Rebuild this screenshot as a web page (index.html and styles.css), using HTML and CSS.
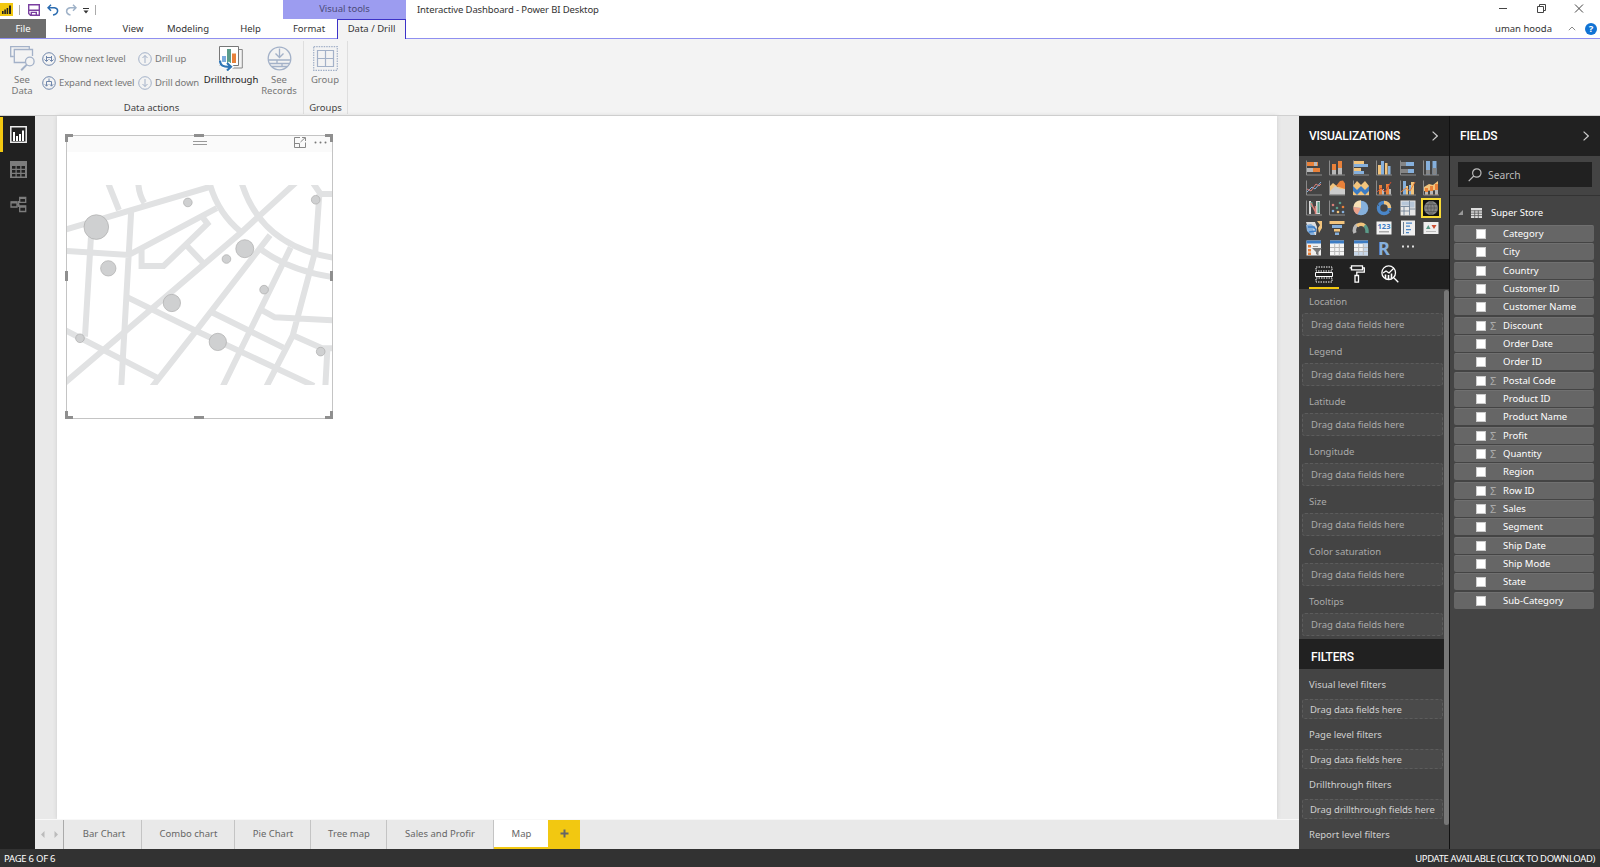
FILE: index.html
```
<!DOCTYPE html>
<html lang="en">

<head>
    <meta charset="UTF-8" />
    <meta name="viewport" content="width=device-width, initial-scale=1.0" />
    <title>Interactive Dashboard - Power BI Desktop</title>
    <link rel="stylesheet" href="styles.css">
</head>

<body>
    <header class="top">
        <div class="top-left">
            <div class="quick-bar">
                <svg class="logo" width="13" height="13" viewBox="0 0 13 13"><path fill="#f2c811" d="M0 0h13v13H0z" /><path d="M2 8h1.6v3H2zM4.3 6.5h1.6V11H4.3zM6.6 5h1.6v6H6.6zM9 2.5h2V11H9z" fill="#222" /></svg>
                <i class="bar"></i>
                <svg class="save" width="12" height="12" viewBox="0 0 12 12" fill="none" stroke="#7a3fa0" stroke-width="1.4"><path d="M.7.7h10.6v10.6H2.5L.7 9.5zM.7 6.2h10.6M3.3 11V8.4h5V11" /></svg>
                <svg class="undo" width="12" height="12" viewBox="0 0 12 12" fill="none" stroke="#2b6cb0" stroke-width="1.5"><path d="M4 .8L1 3.8l3 3M1 3.8h6.5c4.6 1 4 6.4-1.5 7.2" /></svg>
                <svg class="redo" width="12" height="12" viewBox="0 0 12 12" fill="none" stroke="#9fb2c8" stroke-width="1.5"><path d="M8 .8l3 3-3 3M11 3.8H5C.3 4.8.5 10 5.5 11" /></svg>
                <svg class="more" width="6" height="6" viewBox="0 0 6 6"><path d="M0 0h6v1H0zM.5 2.5h5L3 5.5z" fill="#333" /></svg>
                <i class="bar"></i>
            </div>
            <nav class="tabs">
                <a class="tab file">File</a>
                <a class="tab home">Home</a>
                <a class="tab view">View</a>
                <a class="tab modeling">Modeling</a>
                <a class="tab help">Help</a>
            </nav>
        </div>
        <div class="tools">
            <div class="tools-title">Visual tools</div>
            <nav class="tabs">
                <a class="tab format">Format</a>
                <a class="tab drill active">Data / Drill</a>
            </nav>
        </div>
        <div class="top-right">
            <div class="title-row">
                <span class="title">Interactive Dashboard - Power BI Desktop</span>
                <svg class="win-buttons" width="86" height="10" viewBox="0 0 86 10" fill="none" stroke="#444"><path d="M0 4.5h8M38.5 2.5h6v6h-6zM40.5 2.5v-2h6v6h-2M76 .5l8 8M84 .5l-8 8" /></svg>
            </div>
            <div class="user-row">
                <span class="user">uman hooda</span>
                <svg width="8" height="5" viewBox="0 0 8 5" fill="none" stroke="#888"><path d="M.8 4.2L4 1l3.200 3.200" /></svg>
                <span class="question">?</span>
            </div>
        </div>
    </header>

    <section class="ribbon">
        <div class="group data-actions">
            <div class="commands">
                <div class="command see-data">
                    <svg width="25" height="25" viewBox="0 0 25 25" fill="none" stroke="#a3b1c8" stroke-width="1.3"><path d="M3.5 10.5H.7V.7h18.6v2.800M15 16.500H4.300v-13H22.500v6.500" /><circle cx="19.800" cy="15.500" r="4.300" /><path d="M16.800 18.600l-5.600 5.700" stroke-width="2" /></svg>
                    <span>See<br>Data</span>
                </div>
                <div class="stack levels">
                    <div class="small-command">
                        <svg width="14" height="14" viewBox="0 0 14 14" fill="none" stroke="#6f86ab"><circle cx="7" cy="7" r="6.300" /><path d="M4.500 4v5M9.500 4v5M2.500 7.500l2 2 2-2M7.500 7.500l2 2 2-2M4.500 5.500h5" /></svg>
                        <span>Show next level</span>
                    </div>
                    <div class="small-command">
                        <svg width="14" height="14" viewBox="0 0 14 14" fill="none" stroke="#6f86ab"><circle cx="7" cy="7" r="6.300" /><path d="M7 2.500V5M4.500 10V5.500h5V10M2.800 8.300l1.700 1.900 1.700-1.900M7.800 8.300l1.700 1.900 1.700-1.900" /></svg>
                        <span>Expand next level</span>
                    </div>
                </div>
                <div class="stack drills">
                    <div class="small-command">
                        <svg width="14" height="14" viewBox="0 0 14 14" fill="none" stroke="#a3b1c8"><circle cx="7" cy="7" r="6.300" /><path d="M7 11V3.500M4.500 6L7 3.500 9.500 6" /></svg>
                        <span>Drill up</span>
                    </div>
                    <div class="small-command">
                        <svg width="14" height="14" viewBox="0 0 14 14" fill="none" stroke="#a3b1c8"><circle cx="7" cy="7" r="6.300" /><path d="M7 3v7.500M4.500 8L7 10.500 9.500 8" /></svg>
                        <span>Drill down</span>
                    </div>
                </div>
                <div class="command drillthrough">
                    <svg width="25" height="25" viewBox="0 0 25 25" fill="none"><path d="M20 3.500h3.300v18.500H7" stroke="#888" /><path d="M.5.5h19v19H.5z" fill="#fff" stroke="#777" /><path fill="#7cabdd" d="M3 10h4v6H3z" /><path fill="#5b9c8a" d="M8 3h4v14H8z" /><path fill="#e8813a" d="M13 7.500h4V17h-4z" /><path d="M1 14.500c0 5 3 6.500 10 6.300M8.500 17l4 3.800-4 3.700" stroke="#fff" stroke-width="4" /><path d="M1 14.500c0 5 3 6.500 10 6.300M8 17l4 3.800L8 24.500" stroke="#2e75b6" stroke-width="2.200" /></svg>
                    <span>Drillthrough</span>
                </div>
                <div class="command see-records">
                    <svg width="25" height="25" viewBox="0 0 25 25" fill="none" stroke="#a3b1c8" stroke-width="1.3"><circle cx="12.500" cy="12.500" r="11.300" /><path d="M12.500 2.500V11M8.500 7.500l4 4 4-4M1.500 14h22M2.500 17.500h20M5 20.500h15M10 14v3.500M15 17.500v3" /></svg>
                    <span>See<br>Records</span>
                </div>
            </div>
            <div class="group-label">Data actions</div>
        </div>
        <div class="group groups">
            <div class="commands">
                <div class="command">
                    <svg width="25" height="25" viewBox="0 0 25 25" fill="none" stroke="#a3b1c8" stroke-width="1.2"><path d="M.7.7h23.600v23.600H.7z" stroke-dasharray="1.500 1" /><path d="M4.500 4.500h16v16h-16zM12.500 4.500v16M4.500 12.500h16" /></svg>
                    <span>Group</span>
                </div>
            </div>
            <div class="group-label">Groups</div>
        </div>
    </section>

    <main>
        <nav class="side-nav">
            <a class="side-item active"><svg width="17" height="17" viewBox="0 0 17 17"><path d="M.8.8h15.400v15.400H.8z" fill="none" stroke="#eee" stroke-width="1.500" /><path d="M3 6h2v9H3zM6 10h2v5H6zM9 8h2v7H9zM12 4.500h2V15h-2z" fill="#fff" /></svg></a>
            <a class="side-item"><svg width="17" height="17" viewBox="0 0 17 17"><path d="M0 0h17v17H0z" fill="#7d7d7d" /><path d="M2 5h3.500v2.800H2zM6.700 5h3.500v2.800H6.700zM11.500 5H15v2.800h-3.500zM2 9h3.500v2.800H2zM6.700 9h3.500v2.800H6.700zM11.500 9H15v2.800h-3.500zM2 13h3.500v2.500H2zM6.700 13h3.500v2.500H6.700zM11.500 13H15v2.500h-3.500z" fill="#212121" /></svg></a>
            <a class="side-item"><svg width="17" height="17" viewBox="0 0 17 17" fill="none" stroke="#7d7d7d" stroke-width="1.300"><path d="M1 6h6v5H1zM9.700 1.300h6v5h-6zM9.700 10h6v5.500h-6zM7 8.500h2.500M8.500 5v6" /><path d="M1 6.500h6M9.700 2h6M9.700 10.800h6" stroke-width="2" /></svg></a>
        </nav>

        <section class="report">
            <div class="workspace">
                <div class="page">
                    <div class="visual">
                        <div class="visual-header">
                            <i class="grip"></i>
                            <svg class="focus" width="12" height="11" viewBox="0 0 12 11" fill="none" stroke="#888"><path d="M6 .5H.5v10h11V5.500M.5 6.500h5v4M6.500 5L11 .8M8 .5h3.500V4" /></svg>
                            <svg class="dots" width="13" height="3" viewBox="0 0 13 3" fill="#777"><circle cx="1.500" cy="1.500" r="1" /><circle cx="6.500" cy="1.500" r="1" /><circle cx="11.500" cy="1.500" r="1" /></svg>
                        </div>
                        <svg class="map" viewBox="50 195 796 600">
                            <g class="roads">
                                <path d="M40 330L480 200M174 190l32 80M264 190q3 35 18 58M243 270L213 800M122 350L104 650M40 392l195 13L500 264M274 390v48h66l132-127-15-20M408 375l57 60" />
                                <path d="M480 195q25 85 92 140M575 190q60 190 280 224M740 185L570 340 40 792M660 345L440 630 305 802M232 532l200 98 360 168M40 628l282 146M485 577l215 106" />
                                <path d="M635 390q90 65 220 82M722 382L518 800M790 190l22 32h44M808 222l-12 170-56 210-12 45-80 155M638 572l36 20 180 9M730 647l86 38h40M832 690l-6 110" />
                            </g>
                            <g class="bubbles">
                                <circle cx="138" cy="321" r="37" />
                                <circle cx="174" cy="445" r="23" />
                                <circle cx="413" cy="247" r="13" />
                                <circle cx="797" cy="239" r="13" />
                                <circle cx="584" cy="386" r="27" />
                                <circle cx="529" cy="417" r="13" />
                                <circle cx="642" cy="509" r="13" />
                                <circle cx="365" cy="549" r="26" />
                                <circle cx="503" cy="666" r="26" />
                                <circle cx="89" cy="655" r="13" />
                                <circle cx="812" cy="695" r="13" />
                            </g>
                        </svg>
                        <svg class="handles" width="268" height="285" viewBox="0 0 268 285" fill="none" stroke="#8f8f8f" stroke-width="3"><path d="M1.500 8V1.500H8M260 1.500h6.500V8M1.500 277v6.500H8M260 283.500h6.500V277M129 1.500h10M129 283.500h10M1.500 137v10M266.500 137v10" /></svg>
                    </div>
                </div>
            </div>
            <nav class="page-tabs">
                <div class="arrows">
                    <svg width="17" height="7" viewBox="0 0 17 7" fill="#bbb"><path d="M3.500 0v7L0 3.500zM13.500 0v7L17 3.500z" /></svg>
                </div>
                <a class="page-tab bar-chart">Bar Chart</a>
                <a class="page-tab combo">Combo chart</a>
                <a class="page-tab pie">Pie Chart</a>
                <a class="page-tab tree">Tree map</a>
                <a class="page-tab sales">Sales and Profir</a>
                <a class="page-tab current">Map</a>
                <a class="add-page"><svg width="9" height="9" viewBox="0 0 9 9"><path d="M4.500.5v8M.5 4.500h8" stroke="#666" stroke-width="2" /></svg></a>
            </nav>
        </section>

        <aside class="pane visualizations">
            <div class="pane-header"><h2>VISUALIZATIONS</h2><svg width="6" height="10" viewBox="0 0 6 10" fill="none" stroke="#ccc" stroke-width="1.2"><path d="M.6.6L5.300 5 .6 9.400" /></svg></div>
            <div class="gallery">
                <svg viewBox="0 0 16 16"><path d="M.5.5v14.500H16" class="axis" /><path fill="#e8813a" d="M1 2h11v4H1zM7 8h7v4H7z" /><path fill="#b8b8b8" d="M1 8h6v4H1zM8 2h3v4H8z" /></svg>
                <svg viewBox="0 0 16 16"><path d="M.5.5v14.500H16" class="axis" /><path fill="#e8813a" d="M3 4h4v7H3zM9 1h4v8H9z" /><path fill="#b8b8b8" d="M3 10h4v4.500H3zM9 8h4v6.500H9z" /></svg>
                <svg viewBox="0 0 16 16"><path d="M.5.5v14.500H16" class="axis" /><path fill="#f2c47c" d="M1 1h10v3H1zM1 8h7v3H1z" /><path fill="#86b0dc" d="M1 4h14v3H1zM1 11h10v3H1z" /></svg>
                <svg viewBox="0 0 16 16"><path d="M.5.5v14.500H16" class="axis" /><path fill="#f2c47c" d="M2 5h3v9.500H2zM9 3h2.500v11.500H9z" /><path fill="#86b0dc" d="M5 1h3v13.500H5zM12 6h2.500v8.500H12z" /></svg>
                <svg viewBox="0 0 16 16"><path d="M.5.5v14.500H16" class="axis" /><path fill="#86b0dc" d="M1 2h13v4H1zM1 9h13v4H1z" /><path fill="#858585" d="M1 2h5v4H1zM1 9h7v4H1z" /></svg>
                <svg viewBox="0 0 16 16"><path d="M.5.5v14.500H16" class="axis" /><path fill="#86b0dc" d="M3 1h4v13.500H3zM9.500 1h4v13.500h-4z" /><path fill="#858585" d="M3 10h4v4.500H3zM9.500 8h4v6.500h-4z" /></svg>

                <svg viewBox="0 0 16 16"><path d="M.5.5v14.500H16" class="axis" /><path d="M1 12l5-5 3 2 6-7" fill="none" stroke="#86b0dc" /><path d="M1 9l4 2 5-7 3 2 2-2" fill="none" stroke="#d77f78" /></svg>
                <svg viewBox="0 0 16 16"><path d="M.5.5v14.500H16" class="axis" /><path fill="#f2c47c" d="M1 6l3-3 5 4 3-6 4 3v10H1z" /><path fill="#e8813a" d="M7 6l4-5 3-.5 2 3V9z" /><path fill="#ccc" d="M1 11l5-5 5 3h5v5.500H1z" /></svg>
                <svg viewBox="0 0 16 16"><path d="M.5.5v14.500H16" class="axis" /><path fill="#f2c47c" d="M0 6l4-5 4 4 4-4 4 5v9H0z" /><path fill="#3c7cc4" d="M0 6l4 4 4-4 4 4 4-4v5l-4 4-4-4-4 4-4-4z" /></svg>
                <svg viewBox="0 0 16 16"><path d="M.5.5v14.500H16" class="axis" /><path fill="#e8813a" d="M3 5h3v9.500H3zM10 4h3v10.500h-3z" /><path fill="#b8b8b8" d="M6 9h2v5.500H6zM13 9h2v5.500h-2z" /><path d="M1 12l4-4 4 4 6-10" fill="none" stroke="#cc4d30" /></svg>
                <svg viewBox="0 0 16 16"><path d="M.5.5v14.500H16" class="axis" /><path fill="#86b0dc" d="M3 1h3v13.500H3zM9 5h2v9.500H9z" /><path fill="#f2c47c" d="M6 6h2v8.500H6zM11 2h3v12.500h-3z" /><path d="M1 12l5-4 4 3 5-9" fill="none" stroke="#e8813a" /></svg>
                <svg viewBox="0 0 16 16"><path d="M.5.5v14.500H16" class="axis" /><path fill="#f2c47c" d="M1 7l5-3 4 1 5-4v9L1 11z" /><path fill="#e8813a" d="M2 8h3v6.500H2zM7 6h3v8.500H7zM12 4h3v10.500h-3z" /><path fill="#b8b8b8" d="M2 12h3v2.500H2zM7 11h3v3.500H7zM12 10h3v4.500h-3z" /></svg>

                <svg viewBox="0 0 16 16"><path d="M.5.5v14.500H16" class="axis" /><path fill="#ddd" d="M3 1h2v13H3zM10 1h4v13h-4z" /><path d="M5.500 2v5M12.500 2v11" stroke="#5b9c8a" stroke-width="2" /><path d="M5 3l5 10M9.500 6v8" stroke="#d77f78" stroke-width="1.500" /></svg>
                <svg viewBox="0 0 16 16"><path d="M.5.5v14.500H16" class="axis" /><circle cx="4" cy="5" r="1.300" fill="#d77f78" /><circle cx="8" cy="8" r="1.300" fill="#5b9c8a" /><circle cx="11" cy="3" r="1.300" fill="#5b9c8a" /><circle cx="4" cy="11" r="1.300" fill="#86b0dc" /><circle cx="9" cy="12" r="1.300" fill="#f2c47c" /><circle cx="14" cy="7" r="1.300" fill="#e8813a" /><circle cx="14" cy="12" r="1.300" fill="#86b0dc" /></svg>
                <svg viewBox="0 0 16 16"><circle cx="8" cy="8" r="7.300" fill="#86b0dc" /><path fill="#f6dfb5" d="M8 8V.2A7.500 7.500 0 0 0 .3 7z" /><path fill="#eba18a" d="M8 8L.3 7A7.500 7.500 0 0 0 4.500 14.500z" /></svg>
                <svg viewBox="0 0 16 16" fill="none" stroke-width="3.500"><circle cx="8" cy="8" r="5.500" stroke="#4a86c8" /><path d="M8 2.500A5.500 5.500 0 0 1 13.500 8" stroke="#f2c47c" /><path d="M3 5.500l-1.500-1M13 11l2 1" stroke="#444" stroke-width="1" /></svg>
                <svg viewBox="0 0 16 16"><path fill="#e6e6e6" d="M.5.5h15v15H.5z" /><path fill="#b6c6d8" d="M1.500 1.500H9v4H1.500zM10 1.500h4.500v6H10z" /><path d="M.5 6.500h9M9.500.5v15M9.500 9h6M4 6.500v9M.5 11h9" stroke="#667a91" fill="none" stroke-width=".8" /></svg>
                <svg class="selected" viewBox="0 0 16 16"><circle cx="8" cy="8" r="7" fill="#858585" /><path d="M1 8h14M2 4.500h12M2 11.500h12M8 1v14M8 1q-7 7 0 14M8 1q7 7 0 14" fill="none" stroke="#555" stroke-width=".7" /></svg>

                <svg viewBox="0 0 16 16"><path fill="#ddd" d="M0 2h9l2 5-1 8H5l-2-3z" /><path fill="#86b0dc" d="M0 5l5-1 4 3-2 3 2 5H5l-4-4z" /><path fill="#f2c47c" d="M11 1h5v7l-3 5-1-5 2-3z" /><path d="M2 7h6l2 3M3 12l7-1" fill="none" stroke="#3c7cc4" stroke-width="1.500" /></svg>
                <svg viewBox="0 0 16 16"><path fill="#f2c47c" d="M.5 1h15v3H.5z" /><path fill="#86b0dc" d="M3 5h10v3H3z" /><path fill="#f2c47c" d="M5 9h6v2.500H5z" /><path fill="#86b0dc" d="M6 12.500h4V15H6z" /></svg>
                <svg viewBox="0 0 16 16" fill="none" stroke-width="3.500"><path d="M2 13A6.200 6.200 0 0 1 5 4.500" stroke="#b8b8b8" /><path d="M4 6q4-3.500 8 0" stroke="#f2c47c" /><path d="M11.500 5.500Q14.500 8 14 13" stroke="#5b9c8a" /></svg>
                <svg viewBox="0 0 16 16"><path fill="#f2f2f2" d="M.5 1.500h15v13H.5z" /><text x="8" y="9" text-anchor="middle" class="digits">123</text><path fill="#aaa" d="M3 11h10v1.500H3z" /></svg>
                <svg viewBox="0 0 16 16"><path fill="#eee" d="M1 .5h14v15H1z" /><path fill="#667a91" d="M3 2h1v12H3z" /><path fill="#4a86c8" d="M6 2.500h6v1.300H6zM6 5.500h4v1.300H6zM6 9h5v1.300H6zM6 12h3v1.300H6z" /></svg>
                <svg viewBox="0 0 16 16"><path fill="#eee" d="M.5 2h15v12H.5z" /><path fill="#5b9c8a" d="M3 9l2.300-4L7.500 9z" /><path fill="#cc4d30" d="M8.500 5h5L11 9z" /><path fill="#bbb" d="M3 11h10v1H3z" /></svg>

                <svg viewBox="0 0 16 16"><path fill="#eee" d="M.5.5H15v15H.5z" /><path fill="#3c7cc4" d="M.5.5H15v3H.5z" /><path fill="#e8813a" d="M2 5h3v2.500H2zM2 9h3v2.500H2zM2 12.500h3V15H2z" /><path fill="#999" d="M7 6h5v1H7z" /><path fill="#777" d="M6 8h10l-3.500 4v3.500L10 14v-2z" /></svg>
                <svg viewBox="0 0 16 16"><path fill="#f4f4f4" d="M1 .5h14v15H1z" /><path fill="#3c7cc4" d="M1 .5h14v3H1z" /><path d="M5.700 3.500v12M10.300 3.500v12M1 7.500h14M1 11.500h14" stroke="#bbb" /></svg>
                <svg viewBox="0 0 16 16"><path fill="#f4f4f4" d="M1 .5h14v15H1z" /><path fill="#3c7cc4" d="M1 .5h14v3H1z" /><path fill="#c8d8ea" d="M10.300 3.500H15v12h-4.700zM1 11.500h14v4H1z" /><path d="M5.700 3.500v12M10.300 3.500v12M1 7.500h14M1 11.500h14" stroke="#bbb" /></svg>
                <svg viewBox="0 0 16 16"><text x="8" y="15" text-anchor="middle" class="r-script">R</text></svg>
                <svg viewBox="0 0 16 16" fill="#ddd"><path d="M2 5.500h2v2H2zM7 5.500h2v2H7zM12 5.500h2v2h-2z" /></svg>
            </div>
            <div class="pane-tabs">
                <a class="active"><svg width="18" height="17" viewBox="0 0 18 17" fill="none" stroke="#fff"><path d="M1 1h16v4H1zM1 12h16v4H1z" stroke-dasharray="1.500 1" /><path d="M.5 6.500h17v4H.5z" /></svg></a>
                <a><svg width="16" height="18" viewBox="0 0 16 18" fill="none" stroke="#fff" stroke-width="1.300"><path d="M2.500.8h11v4h-11zM2.500 2.800H.7M13.500 2.800h1.800v4.400H7.800v3M6 10.500h3.500v6.700H6z" /></svg></a>
                <a><svg width="18" height="18" viewBox="0 0 18 18" fill="none" stroke="#fff" stroke-width="1.300"><circle cx="7.700" cy="7.700" r="6.800" /><path d="M12.800 12.800l4.500 4.500M2 8l3-2 3 2 5-5" /><path d="M4.500 13V9.500M7.500 14v-4M10.500 13V8.500" stroke-width="1.600" /></svg></a>
            </div>
            <div class="pane-body">
                <div class="wells">
                    <h3>Location</h3><div class="drop">Drag data fields here</div>
                    <h3>Legend</h3><div class="drop">Drag data fields here</div>
                    <h3>Latitude</h3><div class="drop">Drag data fields here</div>
                    <h3>Longitude</h3><div class="drop">Drag data fields here</div>
                    <h3>Size</h3><div class="drop">Drag data fields here</div>
                    <h3>Color saturation</h3><div class="drop">Drag data fields here</div>
                    <h3>Tooltips</h3><div class="drop">Drag data fields here</div>
                </div>
                <h2 class="filters-title">FILTERS</h2>
                <div class="wells filters">
                    <h3>Visual level filters</h3><div class="drop">Drag data fields here</div>
                    <h3>Page level filters</h3><div class="drop">Drag data fields here</div>
                    <h3>Drillthrough filters</h3><div class="drop">Drag drillthrough fields here</div>
                    <h3>Report level filters</h3>
                </div>
                <i class="scrollbar"></i>
            </div>
        </aside>

        <aside class="pane fields">
            <div class="pane-header"><h2>FIELDS</h2><svg width="6" height="10" viewBox="0 0 6 10" fill="none" stroke="#ccc" stroke-width="1.2"><path d="M.6.6L5.300 5 .6 9.400" /></svg></div>
            <div class="search-row">
                <div class="search"><svg width="14" height="14" viewBox="0 0 14 14" fill="none" stroke="#bbb" stroke-width="1.2"><circle cx="8.800" cy="5" r="4.200" /><path d="M5.800 8L.7 13.200" /></svg><span>Search</span></div>
            </div>
            <div class="table-name">
                <svg width="5" height="5" viewBox="0 0 5 5"><path d="M5 0v5H0z" fill="#999" /></svg>
                <svg width="11" height="10" viewBox="0 0 11 10"><path d="M0 0h11v10H0z" fill="#ddd" /><path d="M0 2.800h11M0 5.200h11M0 7.600h11M3.700 2.500V10M7.300 2.500V10" stroke="#555" stroke-width=".8" /></svg>
                <span>Super Store</span>
            </div>
            <ul class="field-list">
                <li><i></i><b></b>Category</li>
                <li><i></i><b></b>City</li>
                <li><i></i><b></b>Country</li>
                <li><i></i><b></b>Customer ID</li>
                <li><i></i><b></b>Customer Name</li>
                <li><i></i><b>Σ</b>Discount</li>
                <li><i></i><b></b>Order Date</li>
                <li><i></i><b></b>Order ID</li>
                <li><i></i><b>Σ</b>Postal Code</li>
                <li><i></i><b></b>Product ID</li>
                <li><i></i><b></b>Product Name</li>
                <li><i></i><b>Σ</b>Profit</li>
                <li><i></i><b>Σ</b>Quantity</li>
                <li><i></i><b></b>Region</li>
                <li><i></i><b>Σ</b>Row ID</li>
                <li><i></i><b>Σ</b>Sales</li>
                <li><i></i><b></b>Segment</li>
                <li><i></i><b></b>Ship Date</li>
                <li><i></i><b></b>Ship Mode</li>
                <li><i></i><b></b>State</li>
                <li><i></i><b></b>Sub-Category</li>
            </ul>
        </aside>
    </main>

    <footer>
        <span class="page-count">PAGE 6 OF 6</span>
        <span class="update">UPDATE AVAILABLE (CLICK TO DOWNLOAD)</span>
    </footer>
</body>

</html>
```
FILE: styles.css
```
:root {
    --yellow: #f2c811;
    --purple: #9c9cf0;
    --blue: #3c32c8;
    --dark: #212121;
    --pane: #444;
    --gray: #e9e9e9;
}

* {
    box-sizing: border-box;
    margin: 0;
    padding: 0;
}

body {
    width: 1600px;
    height: 867px;
    display: flex;
    flex-direction: column;
    overflow: hidden;
    font-family: "Noto Sans", "Open Sans", sans-serif;
    font-size: 9.5px;
    line-height: 12px;
    color: #333;
    white-space: nowrap;
    background: white;
}

svg {
    display: block;
    flex-shrink: 0;
}

/* Title bar and ribbon tabs */
.top {
    display: flex;
    height: 39px;
}

.top-left {
    width: 283px;
}

.quick-bar {
    display: flex;
    align-items: center;
    height: 19px;
}

.quick-bar .bar {
    width: 1px;
    height: 10px;
    background: #aaa;
}

.logo {
    margin-right: 6px;
}

.save {
    margin-left: 8px;
}

.undo {
    margin-left: 7px;
}

.redo {
    margin-left: 6px;
}

.more {
    margin: 3px 6px 0 6px;
}

.tabs {
    display: flex;
    height: 20px;
    border-bottom: 1px solid #8f8ff0;
}

.tab {
    padding-top: 4px;
    text-align: center;
}

.file {
    width: 46px;
    color: white;
    background: #6d6d6d;
}

.home {
    width: 65px;
}

.view {
    width: 44px;
}

.modeling {
    width: 66px;
}

.help {
    width: 59px;
}

.tools {
    width: 123px;
}

.tools-title {
    height: 19px;
    padding-top: 3px;
    text-align: center;
    color: #4b4b78;
    background: var(--purple);
}

.format {
    width: 54px;
    padding-right: 2px;
}

.drill {
    width: 69px;
    height: 20px;
    padding-top: 3px;
    border: 1px solid var(--blue);
    border-bottom: 0;
    background: #f3f3f3;
}

.top-right {
    flex: 1;
    border-bottom: 1px solid #8f8ff0;
}

.title-row {
    display: flex;
    align-items: center;
    justify-content: space-between;
    height: 19px;
    padding: 0 15px 2px 11px;
}

.title {
    padding-top: 3px;
    letter-spacing: -0.12px;
}

.user-row {
    display: flex;
    align-items: center;
    justify-content: flex-end;
    height: 19px;
    padding-right: 3px;
}

.user {
    margin-right: 16px;
}

.question {
    width: 12px;
    height: 12px;
    margin-left: 9px;
    border-radius: 50%;
    color: white;
    background: #1173d4;
    text-align: center;
    font-weight: bold;
}

/* Ribbon */
.ribbon {
    display: flex;
    height: 77px;
    padding-top: 2px;
    background: #f3f3f3;
    border-bottom: 1px solid #d0d0d0;
}

.group {
    height: 73px;
    border-right: 1px solid #dedede;
}

.data-actions {
    width: 304px;
}

.groups {
    width: 44px;
}

.commands {
    display: flex;
    height: 61px;
    padding-top: 5px;
    color: #777;
}

.command {
    display: flex;
    flex-direction: column;
    align-items: center;
    width: 42px;
    line-height: 11px;
    text-align: center;
}

.command span {
    margin-top: 3px;
}

.see-data {
    padding-left: 2px;
}

.stack {
    padding-top: 5px;
}

.levels {
    width: 96px;
}

.drills {
    width: 64px;
}

.small-command {
    display: flex;
    align-items: center;
    gap: 3px;
    height: 15px;
    margin-bottom: 9px;
}

.small-command span {
    letter-spacing: -0.15px;
}

.drillthrough {
    width: 58px;
    color: #222;
}

.see-records {
    width: 38px;
}

.group-label {
    text-align: center;
    color: #444;
}

/* Work area */
main {
    display: flex;
    height: 733px;
}

.side-nav {
    width: 35px;
    padding-top: 1px;
    background: var(--dark);
}

.side-item {
    display: flex;
    align-items: center;
    height: 35px;
    padding-left: 10px;
}

.side-item.active {
    padding-left: 7px;
    border-left: 3px solid var(--yellow);
}

.report {
    display: flex;
    flex-direction: column;
    width: 1264px;
}

.workspace {
    height: 703px;
    padding: 0 22px;
    background: var(--gray);
}

.page {
    height: 100%;
    padding: 19px 0 0 9px;
    background: white;
    box-shadow: 0 0 4px #ccc;
}

.visual {
    position: relative;
    width: 267px;
    height: 284px;
    border: 1px solid #c4c4c4;
}

.visual-header {
    display: flex;
    height: 16px;
    background: #fafafa;
}

.grip {
    width: 14px;
    height: 4px;
    margin: 5px 87px 0 126px;
    border: 1px solid #999;
    border-width: 1px 0;
}

.focus {
    margin-top: 1px;
}

.dots {
    margin: 5px 0 0 8px;
}

.map {
    width: 265px;
    height: 200px;
    margin-top: 33px;
}

.roads {
    fill: none;
    stroke: #e1e2e3;
    stroke-width: 18;
}

.bubbles {
    fill: #cfd0d1;
    stroke: #aaa;
    stroke-width: 2;
}

.handles {
    position: absolute;
    top: -2px;
    left: -2px;
}

/* Page tabs */
.page-tabs {
    display: flex;
    height: 30px;
    background: var(--gray);
    border-top: 1px solid #f8f8f8;
    color: #666;
}

.arrows {
    display: flex;
    align-items: center;
    width: 29px;
    padding-left: 6px;
    border-right: 1px solid #aaa;
}

.page-tab {
    padding: 8px 0 0 1px;
    text-align: center;
    border-right: 1px solid #c4c4c4;
}

.bar-chart {
    width: 78px;
    padding-left: 3px;
}

.combo {
    width: 93px;
}

.pie {
    width: 76px;
}

.tree {
    width: 76px;
}

.sales {
    width: 107px;
    padding-left: 0;
}

.current {
    width: 54px;
    background: white;
    border-right: 0;
    border-bottom: 2px solid var(--yellow);
}

.add-page {
    display: flex;
    align-items: center;
    justify-content: center;
    width: 32px;
    padding-bottom: 2px;
    background: var(--yellow);
}

/* Right panes */
.pane {
    display: flex;
    flex-direction: column;
    background: var(--pane);
    color: #ddd;
}

.visualizations {
    width: 151px;
    border-right: 1px solid #111;
}

.fields {
    width: 150px;
}

.pane-header {
    display: flex;
    align-items: center;
    justify-content: space-between;
    height: 40px;
    padding: 0 11px 0 10px;
    background: var(--dark);
}

h2 {
    font: 500 12px/14px Roboto, sans-serif;
    letter-spacing: -0.15px;
    color: white;
}

.gallery {
    display: grid;
    grid-template-columns: repeat(6, 16px);
    grid-auto-rows: 16px;
    gap: 4px 7.4px;
    height: 103px;
    padding: 3.5px 0 0 7px;
}

.gallery svg {
    width: 16px;
    height: 16px;
    overflow: visible;
}

.gallery .selected {
    background: #111;
    outline: 2px solid #f8da35;
}

.axis {
    fill: none;
    stroke: #8a8a8a;
}

.digits {
    font-size: 7.5px;
    font-weight: bold;
    fill: #3c7cc4;
}

.r-script {
    font-size: 18px;
    font-weight: bold;
    fill: #86b0dc;
}

.pane-tabs {
    display: flex;
    gap: 3px;
    height: 30px;
    padding-left: 10px;
    background: var(--dark);
}

.pane-tabs a {
    display: flex;
    align-items: center;
    justify-content: center;
    width: 30px;
    padding-top: 2px;
    border-bottom: 2px solid transparent;
}

.pane-tabs .active {
    border-color: var(--yellow);
}

.pane-body {
    position: relative;
    flex: 1;
}

.wells {
    height: 350px;
    padding: 7px 6px 0 3px;
    color: #aaa;
}

h3 {
    height: 17px;
    padding-left: 7px;
    font-size: inherit;
    font-weight: normal;
}

.drop {
    height: 23px;
    margin-bottom: 10px;
    padding: 5px 0 0 8px;
    border: 1px dashed #5c5c5c;
    border-radius: 3px;
    background: #4a4a4a;
}

.filters-title {
    height: 30px;
    padding: 11px 0 0 12px;
    background: var(--dark);
}

.filters {
    height: auto;
    padding-top: 10px;
    color: #d0d0d0;
}

.filters h3 {
    height: 20px;
}

.filters .drop {
    height: 20px;
    padding: 4px 0 0 7px;
    letter-spacing: -0.08px;
}

.scrollbar {
    position: absolute;
    top: 1px;
    right: 0;
    width: 5px;
    height: 535px;
    border-radius: 3px;
    background: #777;
}

.search-row {
    height: 40px;
    padding: 6px 8px;
    border-bottom: 1px solid #333;
}

.search {
    display: flex;
    align-items: center;
    gap: 6px;
    height: 25px;
    padding-left: 10px;
    background: var(--dark);
    color: #bbb;
    font-size: 10.3px;
}

.table-name {
    display: flex;
    align-items: center;
    height: 29px;
    padding: 4px 0 0 8px;
    color: white;
}

.table-name svg + svg {
    margin: 0 9px 0 8px;
}

.field-list {
    list-style: none;
    padding: 0 6px 0 4px;
}

.field-list li {
    display: flex;
    align-items: center;
    height: 17px;
    margin-bottom: 1.34px;
    padding-left: 22px;
    border-top: 1px solid #707070;
    border-radius: 2px;
    color: white;
    background: #666;
}

.field-list i {
    width: 10px;
    height: 10px;
    border: 1px solid #ccc;
    background: white;
}

.field-list b {
    width: 17px;
    padding-left: 4px;
    color: #aaa;
    font-size: 11px;
    font-weight: normal;
}

footer {
    display: flex;
    justify-content: space-between;
    height: 18px;
    padding: 4px 5px 0 4px;
    color: white;
    background: #323232;
}

.page-count {
    letter-spacing: -0.25px;
}

.update {
    letter-spacing: -0.36px;
}
```
